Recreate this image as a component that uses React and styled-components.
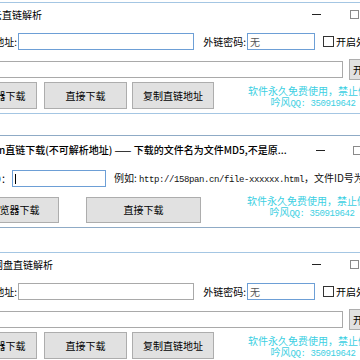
import styled, { createGlobalStyle } from "styled-components";

const GlobalStyle = createGlobalStyle`
  html, body {
    margin: 0;
    padding: 0;
    background: #ffffff;
  }
  #root {
    width: 360px;
    height: 360px;
    overflow: hidden;
    font-family: "Noto Sans CJK SC", "Liberation Sans", sans-serif;
    font-size: 10px;
    color: #000;
  }
`;

const Frame = styled.section`
  margin-left: -60px;
  margin-top: ${(p) => p.$top}px;
  width: 440px;
  border-top: 1px solid ${(p) => p.$line};
  border-bottom: 1px solid ${(p) => p.$line};
  padding-bottom: 4px;
  background: #fff;
  display: flex;
  flex-direction: column;
`;

const TitleBar = styled.div`
  display: flex;
  align-items: center;
  height: ${(p) => p.$h}px;
  white-space: nowrap;
`;

const Title = styled.span`
  flex-shrink: 0;
  margin-left: ${(p) => p.$left}px;
  font-weight: ${(p) => (p.$bold ? 500 : 400)};
  line-height: 12px;
`;

const Controls = styled.div`
  margin-left: auto;
  flex-shrink: 0;
  display: flex;
  align-items: center;
  padding-right: ${(p) => p.$right}px;
`;

const MinGlyph = styled.span`
  width: 9px;
  height: 1px;
  background: #222;
`;

const MaxGlyph = styled.span`
  margin-left: ${(p) => p.$gap}px;
  width: 7px;
  height: 7px;
  border: 1px solid #8a8a8a;
`;

const Row = styled.div`
  display: flex;
  align-items: center;
  height: ${(p) => p.$h}px;
  margin-top: ${(p) => p.$top}px;
  white-space: nowrap;

  & > * {
    flex-shrink: 0;
  }
`;

const Label = styled.span`
  width: ${(p) => p.$w}px;
  margin-left: ${(p) => p.$left || 0}px;
  text-align: right;
  line-height: 12px;
`;

const Field = styled.div`
  box-sizing: border-box;
  width: ${(p) => p.$w}px;
  height: ${(p) => p.$h || 17}px;
  margin-left: ${(p) => p.$left || 0}px;
  border: 1px solid ${(p) => (p.$focus ? "#6d9fd6" : "#a9a9a9")};
  background: #fff;
  display: flex;
  align-items: center;
  padding-left: 2px;
  color: #555;
  line-height: 12px;
`;

const Caret = styled.span`
  width: 1px;
  height: 10px;
  background: #000;
`;

const Check = styled.span`
  box-sizing: border-box;
  width: 11px;
  height: 11px;
  margin-left: ${(p) => p.$left}px;
  border: 1px solid #333;
  background: #fff;
`;

const CheckText = styled.span`
  margin-left: 2px;
  line-height: 12px;
`;

const Button = styled.div`
  box-sizing: border-box;
  width: ${(p) => p.$w}px;
  height: ${(p) => p.$h}px;
  margin-left: ${(p) => p.$left}px;
  background: #e1e1e1;
  border: 1px solid #adadad;
  display: flex;
  align-items: center;
  justify-content: ${(p) => (p.$start ? "flex-start" : "center")};
  padding-left: ${(p) => (p.$start ? 3 : 0)}px;
  line-height: 12px;
`;

const Notice = styled.div`
  margin-left: ${(p) => p.$left}px;
  margin-top: ${(p) => p.$top}px;
  display: flex;
  flex-direction: column;
  align-items: center;
  color: #3ccfe2;
  line-height: 11px;
`;

const Mono = styled.span`
  font-family: "Liberation Mono", "DejaVu Sans Mono", monospace;
  font-size: 9px;
  letter-spacing: -0.4px;
`;

const Example = styled.span`
  margin-left: ${(p) => p.$left}px;
  line-height: 12px;
  color: #111;
`;

function Credit({ left, top }) {
  return (
    <Notice $left={left} $top={top}>
      <span>软件永久免费使用，禁止倒卖</span>
      <span>
        吟风<Mono>QQ: 350919642</Mono>
      </span>
    </Notice>
  );
}

function ParseWindow({ top, title, titleLeft, firstFocus }) {
  return (
    <Frame $top={top} $line="#a4c6e3">
      <TitleBar $h={23}>
        <Title $left={titleLeft}>{title}</Title>
        <Controls $right={21}>
          <MinGlyph />
          <MaxGlyph $gap={29} />
        </Controls>
      </TitleBar>
      <Row $h={17} $top={7}>
        <Label $w={77}>分享地址:</Label>
        <Field $w={176} $left={1} $focus={firstFocus} />
        <Label $w={46} $left={6}>外链密码:</Label>
        <Field $w={68} $left={1} $focus>
          无
        </Field>
        <Check $left={8} />
        <CheckText>开启外链下载</CheckText>
      </Row>
      <Row $h={21} $top={9}>
        <Field $w={403} />
        <Button $w={48} $h={21} $left={6} $start>
          开始解析
        </Button>
      </Row>
      <Row $h={27} $top={2}>
        <Button $w={73} $h={27} $left={24}>
          浏览器下载
        </Button>
        <Button $w={83} $h={27} $left={7}>
          直接下载
        </Button>
        <Button $w={82} $h={27} $left={5}>
          复制直链地址
        </Button>
        <Credit left={34} top={3} />
      </Row>
    </Frame>
  );
}

function DirectWindow() {
  return (
    <Frame $top={21} $line="#8fabc6">
      <TitleBar $h={28}>
        <Title $left={30} $bold>
          158pan直链下载(不可解析地址) —— 下载的文件名为文件MD5,不是原...
        </Title>
        <Controls $right={18}>
          <MinGlyph />
          <MaxGlyph $gap={28} />
        </Controls>
      </TitleBar>
      <Row $h={17} $top={6}>
        <Label $w={71}>文件ID：</Label>
        <Field $w={94} $left={1} $focus>
          <Caret />
        </Field>
        <Example $left={8}>
          例如: <Mono>http://158pan.cn/file-xxxxxx.html</Mono>，文件ID号为xxxxxx
        </Example>
      </Row>
      <Row $h={26} $top={10}>
        <Button $w={109} $h={26} $left={10}>
          调用浏览器下载
        </Button>
        <Button $w={115} $h={26} $left={27}>
          直接下载
        </Button>
        <Credit left={46} top={-6} />
      </Row>
    </Frame>
  );
}

export default function App() {
  return (
    <>
      <GlobalStyle />
      <ParseWindow top={2} title="蓝奏云直链解析" titleLeft={32} firstFocus />
      <DirectWindow />
      <ParseWindow top={24} title="城通网盘直链解析" titleLeft={33} />
    </>
  );
}
